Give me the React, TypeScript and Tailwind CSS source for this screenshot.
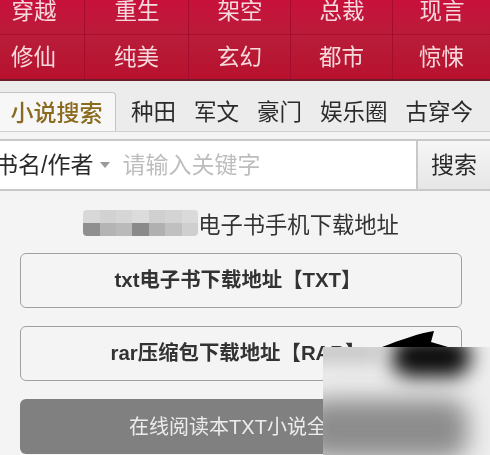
const font = { fontFamily: '"Liberation Sans", "Noto Sans CJK SC", sans-serif' };

const rows = [
  ["穿越", "重生", "架空", "总裁", "现言"],
  ["修仙", "纯美", "玄幻", "都市", "惊悚"],
];
const tabs = ["种田", "军文", "豪门", "娱乐圈", "古穿今"];
const mosaicTop = ["#d8d8d8", "#d2d2d2", "#d6d6d6", "#dcdcdc", "#d0d0d0", "#d4d4d4", "#dadada"];
const mosaicBottom = ["#8f8f8f", "#b4b4b4", "#bababa", "#8a8a8a", "#b0b0b0", "#c0c0c0", "#cfcfcf"];

export default function App() {
  return (
    <div className="relative w-[490px] h-[455px] overflow-hidden bg-[#f4f4f4] text-[#222]" style={font}>
      <div className="blur-[0.6px]">
        <div className="h-[81px] border-b-2 border-[#6e1a28] bg-gradient-to-b from-[#c8103c] via-[#b81c38] to-[#b8102e]">
          {rows.map((r, i) => (
            <div key={i} className={i === 0 ? "grid grid-cols-[85px_104px_102px_102px_97px] h-[34px]" : "grid grid-cols-[85px_104px_102px_102px_97px] h-[45px] border-t border-[#a80f2e]"}>
              {r.map((t, j) => (
                <div key={t} className={j === 0 ? "flex items-center justify-center border-r border-[#a30c2c] pr-[17px] text-[22.5px] text-[#f6d9dc]" : j < 4 ? "flex items-center justify-center border-r border-[#a30c2c] text-[22.5px] text-[#f6d9dc]" : "flex items-center justify-center text-[22.5px] text-[#f6d9dc]"}>
                  <span className={i === 0 ? "-mt-[11px] pl-[1px]" : "mt-[1px]"}>{t}</span>
                </div>
              ))}
            </div>
          ))}
        </div>

        <div className="flex items-end h-[51px] bg-[#ececec] border-b border-[#d0d0d0]">
          <div className="flex h-[39px] w-[116px] items-center justify-center rounded-tr-[4px] border-t border-r border-[#c4c4c4] bg-[#f7f7f7] pt-[3px] text-[23px] font-medium text-[#8a6a1e]">
            <span className="pr-[2px]">小说搜索</span>
          </div>
          <div className="flex h-[39px] flex-1 items-center gap-[18px] pl-[15px] pt-[3px] text-[22.5px] text-[#2a2a2a]">
            {tabs.map((t) => (
              <span key={t} className="shrink-0">{t}</span>
            ))}
          </div>
        </div>

        <div className="mt-[7px] flex h-[52px] border-y-2 border-[#c8c8c8] bg-white">
          <div className="flex flex-1 items-center overflow-hidden">
            <span className="ml-[-5px] shrink-0 text-[23px] text-[#2a2a2a]">书名/作者</span>
            <span className="ml-[7px] h-0 w-0 border-x-[5px] border-t-[6px] border-x-transparent border-t-[#999]" />
            <span className="ml-[12px] shrink-0 text-[23px] text-[#bdbdbd]">请输入关键字</span>
          </div>
          <div className="flex w-[74px] items-center justify-center border-l-2 border-[#c8c8c8] bg-gradient-to-b from-[#f6f6f6] to-[#e6e6e6] text-[23px] text-[#2a2a2a]">
            搜索
          </div>
        </div>

        <div className="px-[20px] pr-[28px]">
          <div className="mt-[19px] h-[28px] text-center text-[22.3px] leading-[28px] text-[#333]">
            <div className="flex justify-center">
              <div className="relative flex h-[26px] w-[115px] shrink-0 flex-col overflow-hidden rounded-[4px]">
                <div className="flex h-[13px]">
                  {mosaicTop.map((c, i) => (
                    <div key={i} className="h-full flex-1" style={{ background: c }} />
                  ))}
                </div>
                <div className="flex h-[13px]">
                  {mosaicBottom.map((c, i) => (
                    <div key={i} className="h-full flex-1" style={{ background: c }} />
                  ))}
                </div>
              </div>
              <span className="shrink-0 pt-[2px]">电子书手机下载地址</span>
            </div>
          </div>

          <div className="mt-[15px] flex h-[55px] items-center justify-center rounded-[6px] border-[1.5px] border-[#a0a0a0] pr-[6px] text-[20.4px] font-bold text-[#333]">
            txt电子书下载地址【TXT】
          </div>
          <div className="mt-[18px] flex h-[55px] items-center justify-center rounded-[6px] border-[1.5px] border-[#a0a0a0] pr-[6px] text-[20.4px] font-bold text-[#333]">
            rar压缩包下载地址【RAR】
          </div>
          <div className="mt-[18px] flex h-[55px] items-center justify-center rounded-[6px] bg-[#808080] pr-[6px] text-[20px] text-[#ececec]">
            在线阅读本TXT小说全文
          </div>
        </div>
      </div>

      <svg className="absolute left-[380px] top-[328px]" width="70" height="22" viewBox="0 0 70 22">
        <path d="M2 19 C 20 12, 40 5, 54 3 L 51 14 L 68 19 Z" fill="#000" />
      </svg>

      <div className="absolute left-[323px] top-[347px] h-[108px] w-[167px] overflow-hidden bg-[#eeeeee]">
        <div className="absolute left-[68px] top-[-10px] h-[40px] w-[80px] rounded-full bg-[#0a0a0a] blur-[10px]" />
        <div className="absolute left-[-30px] top-[-4px] h-[18px] w-[90px] bg-[#bbb] blur-[10px]" />
        <div className="absolute left-[-20px] top-[52px] h-[60px] w-[165px] rounded-[20px] bg-[#8c8c8c] blur-[12px]" />
      </div>
    </div>
  );
}
